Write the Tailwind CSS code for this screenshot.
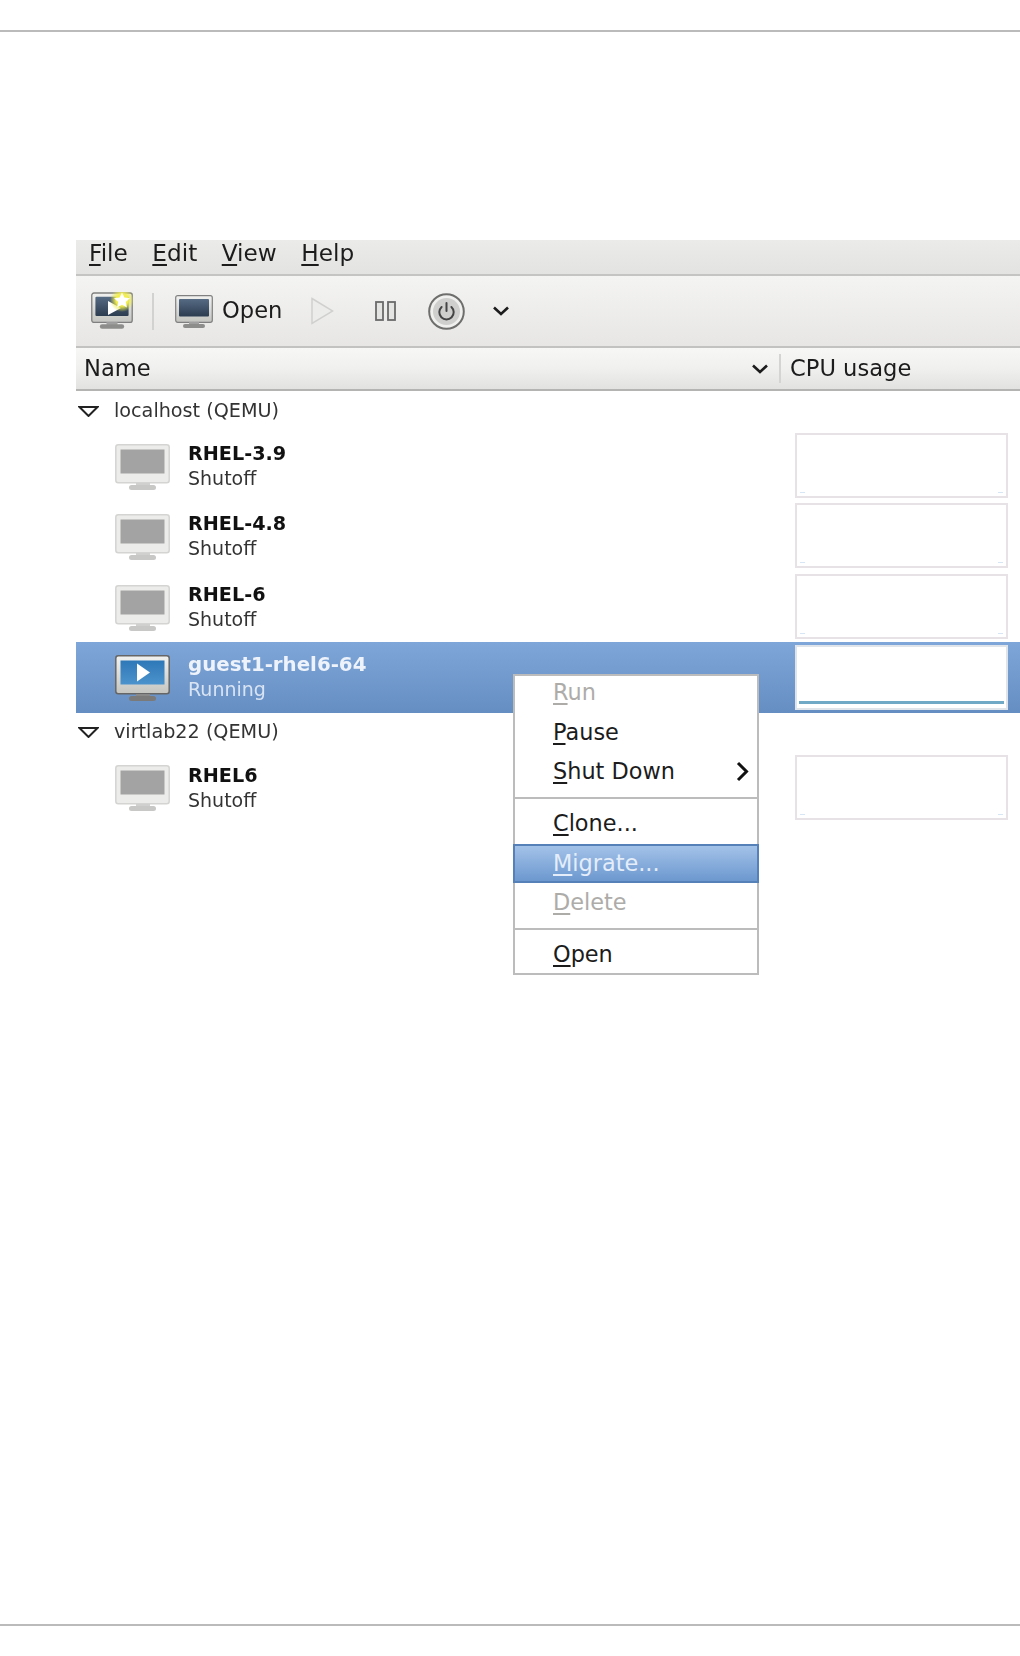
<!DOCTYPE html>
<html lang="en">
<head>
  <meta charset="UTF-8">
  <title>Virtual Machine Manager</title>
  <script src="https://cdn.jsdelivr.net/npm/@tailwindcss/browser@4"></script>
</head>
<body class="bg-white min-h-screen font-['DejaVu_Sans',sans-serif] text-[#1c1c1c] overflow-hidden">

  <!-- shared icons -->
  <svg class="absolute w-0 h-0">
    <defs>
      <linearGradient id="darkScreen" x1="0" y1="0" x2="0" y2="1">
        <stop offset="0" stop-color="#566b84"/>
        <stop offset="1" stop-color="#2c3c50"/>
      </linearGradient>
      <linearGradient id="blueScreen" x1="0" y1="0" x2="0" y2="1">
        <stop offset="0" stop-color="#2f78b8"/>
        <stop offset="1" stop-color="#4b93cc"/>
      </linearGradient>
      <linearGradient id="bezel" x1="0" y1="0" x2="0" y2="1">
        <stop offset="0" stop-color="#f2f2f0"/>
        <stop offset="1" stop-color="#c4c4c1"/>
      </linearGradient>
      <radialGradient id="glow">
        <stop offset="0.5" stop-color="#f2ee50"/>
        <stop offset="1" stop-color="#e8e840" stop-opacity="0"/>
      </radialGradient>
      <symbol id="vmOff" viewBox="0 0 55 46">
        <rect x="0.8" y="0.8" width="53.4" height="38" rx="2.5" fill="#ececea" stroke="#d4d4d2" stroke-width="1.5"/>
        <rect x="5.5" y="5.5" width="44" height="24" fill="#a3a3a3"/>
        <rect x="21" y="39" width="14" height="3" fill="#d0d0ce"/>
        <rect x="14" y="41" width="27" height="5" rx="2.5" fill="#c8c8c6"/>
      </symbol>
      <symbol id="vmOn" viewBox="0 0 55 46">
        <rect x="0.8" y="0.8" width="53.4" height="38" rx="2.5" fill="url(#bezel)" stroke="#666" stroke-width="1.5"/>
        <rect x="5.5" y="5.5" width="44" height="24" fill="url(#blueScreen)"/>
        <path d="M22 8.5 L35 17.5 L22 26.5 Z" fill="#fff"/>
        <rect x="21" y="39" width="14" height="3" fill="#888"/>
        <rect x="14" y="41" width="27" height="5" rx="2.5" fill="#7a7a7a"/>
      </symbol>
      <symbol id="vmDark" viewBox="0 0 38 33">
        <rect x="0.7" y="0.7" width="36.6" height="26.6" rx="2" fill="url(#bezel)" stroke="#808080" stroke-width="1.2"/>
        <rect x="4" y="4" width="30" height="17.5" rx="1" fill="url(#darkScreen)"/>
        <rect x="14" y="27" width="10" height="2.5" fill="#a0a0a0"/>
        <rect x="8" y="29" width="22" height="4" rx="2" fill="#8d8d8b"/>
      </symbol>
    </defs>
  </svg>

  <div class="h-[30px]"></div>
  <div class="h-[2px] bg-[#bbbbbb]"></div>
  <div class="h-[208px]"></div>

  <div class="relative ml-[76px] h-[1384px] blur-[0.6px]">
    <!-- menu bar -->
    <div class="h-[36px] flex items-center pl-[13px] pb-[7px] gap-[24.5px] text-[23.2px] bg-gradient-to-b from-[#ebebe9] to-[#e3e3e1] border-b-2 border-[#c4c4c2]">
      <span><span class="underline underline-offset-[3px]">F</span>ile</span>
      <span><span class="underline underline-offset-[3px]">E</span>dit</span>
      <span><span class="underline underline-offset-[3px]">V</span>iew</span>
      <span><span class="underline underline-offset-[3px]">H</span>elp</span>
    </div>

    <!-- toolbar -->
    <div class="h-[72px] flex items-center pl-[15px] bg-gradient-to-b from-[#f4f4f2] to-[#e7e6e4] border-b-2 border-[#c2c2c0]">
      <svg class="w-[42px] h-[38px] shrink-0" viewBox="0 0 42 38">
        <use href="#vmDark" x="0" y="0" width="42" height="37"/>
        <path d="M17 9 L30 16 L17 23 Z" fill="#fff"/>
        <circle cx="31" cy="8" r="12" fill="url(#glow)"/>
        <path d="M31 0.5 L33.4 5.6 L38.9 6.2 L34.8 10 L35.9 15.5 L31 12.8 L26.1 15.5 L27.2 10 L23.1 6.2 L28.6 5.6 Z" fill="#fff"/>
      </svg>
      <div class="ml-[19px] w-[2px] h-[37px] bg-[#d2d2d0]"></div>
      <svg class="ml-[21px] w-[38px] h-[33px] shrink-0"><use href="#vmDark"/></svg>
      <span class="ml-[9px] text-[22.6px]">Open</span>
      <svg class="ml-[29px] w-[23px] h-[28px] shrink-0" viewBox="0 0 23 28">
        <path d="M1 1.5 L21.5 14 L1 26.5 Z" fill="#ececea" stroke="#d0d0ce" stroke-width="1.5"/>
      </svg>
      <svg class="ml-[41px] w-[21px] h-[20px] shrink-0" viewBox="0 0 21 20">
        <rect x="1" y="1" width="7" height="18" fill="#e4e4e2" stroke="#6a6a6a" stroke-width="1.8"/>
        <rect x="13" y="1" width="7" height="18" fill="#e4e4e2" stroke="#6a6a6a" stroke-width="1.8"/>
      </svg>
      <svg class="ml-[32px] w-[37px] h-[37px] shrink-0" viewBox="0 0 37 37">
        <circle cx="18.5" cy="18.5" r="17.3" fill="#f0f0ee" stroke="#6e6e6c" stroke-width="2"/>
        <circle cx="18.5" cy="18.5" r="13.5" fill="#cfcfcd"/>
        <path d="M13.6 14 A7.2 7.2 0 1 0 23.4 14" fill="none" stroke="#444" stroke-width="2" stroke-linecap="round"/>
        <path d="M18.5 10 V18" stroke="#444" stroke-width="2" stroke-linecap="round"/>
      </svg>
      <svg class="ml-[27px] w-[18px] h-[12px] shrink-0" viewBox="0 0 18 12">
        <path d="M2 2.5 L9 9 L16 2.5" fill="none" stroke="#1c1c1c" stroke-width="2.6"/>
      </svg>
    </div>

    <!-- column header -->
    <div class="h-[43px] flex items-center bg-gradient-to-b from-[#f7f7f5] via-[#f0f0ee] to-[#e2e2e0] border-b-2 border-[#b4b4b2] text-[22.6px]">
      <span class="ml-[8px]">Name</span>
      <svg class="ml-auto w-[18px] h-[12px] shrink-0" viewBox="0 0 18 12">
        <path d="M2 2.5 L9 9 L16 2.5" fill="none" stroke="#1c1c1c" stroke-width="2.6"/>
      </svg>
      <div class="ml-[10px] w-[2px] h-[29px] bg-[#d4d4d2]"></div>
      <span class="ml-[9px] w-[230px]">CPU usage</span>
    </div>

    <!-- group: localhost -->
    <div class="h-[39px] flex items-center pt-[2px] text-[19.2px] text-[#333]">
      <svg class="ml-[2px] w-[21px] h-[11px] shrink-0" viewBox="0 0 21 11">
        <path d="M1.5 1 H19.5 L10.5 10 Z" fill="none" stroke="#222" stroke-width="2"/>
      </svg>
      <span class="ml-[15px]">localhost (QEMU)</span>
    </div>

    <div class="h-[70.6px] flex items-center">
      <svg class="ml-[39px] mt-[3px] w-[55px] h-[46px] shrink-0"><use href="#vmOff"/></svg>
      <div class="ml-[18px] mt-[1px] flex flex-col leading-[24px] text-[19px]">
        <span class="font-bold text-[19.2px] text-[#111]">RHEL-3.9</span>
        <span class="text-[#333]">Shutoff</span>
      </div>
      <div class="ml-auto mr-[12px] w-[213px] h-[65px] border-2 border-[#e6e2e6] bg-white flex justify-between items-end px-[3px] pb-[3px]">
        <div class="w-[5px] h-[1px] bg-[#d6e6f4]"></div>
        <div class="w-[5px] h-[1px] bg-[#d6e6f4]"></div>
      </div>
    </div>
    <div class="h-[70.6px] flex items-center">
      <svg class="ml-[39px] mt-[3px] w-[55px] h-[46px] shrink-0"><use href="#vmOff"/></svg>
      <div class="ml-[18px] mt-[1px] flex flex-col leading-[24px] text-[19px]">
        <span class="font-bold text-[19.2px] text-[#111]">RHEL-4.8</span>
        <span class="text-[#333]">Shutoff</span>
      </div>
      <div class="ml-auto mr-[12px] w-[213px] h-[65px] border-2 border-[#e6e2e6] bg-white flex justify-between items-end px-[3px] pb-[3px]">
        <div class="w-[5px] h-[1px] bg-[#d6e6f4]"></div>
        <div class="w-[5px] h-[1px] bg-[#d6e6f4]"></div>
      </div>
    </div>
    <div class="h-[70.6px] flex items-center">
      <svg class="ml-[39px] mt-[3px] w-[55px] h-[46px] shrink-0"><use href="#vmOff"/></svg>
      <div class="ml-[18px] mt-[1px] flex flex-col leading-[24px] text-[19px]">
        <span class="font-bold text-[19.2px] text-[#111]">RHEL-6</span>
        <span class="text-[#333]">Shutoff</span>
      </div>
      <div class="ml-auto mr-[12px] w-[213px] h-[65px] border-2 border-[#e6e2e6] bg-white flex justify-between items-end px-[3px] pb-[3px]">
        <div class="w-[5px] h-[1px] bg-[#d6e6f4]"></div>
        <div class="w-[5px] h-[1px] bg-[#d6e6f4]"></div>
      </div>
    </div>

    <!-- selected row -->
    <div class="h-[71px] flex items-center bg-gradient-to-b from-[#7fa6d8] to-[#658ec3]">
      <svg class="ml-[39px] mt-[1px] w-[55px] h-[46px] shrink-0"><use href="#vmOn"/></svg>
      <div class="ml-[18px] flex flex-col leading-[24px] text-[19px]">
        <span class="font-bold text-[19.8px] text-[#eef3fb]">guest1-rhel6-64</span>
        <span class="text-[#d9e4f3]">Running</span>
      </div>
      <div class="ml-auto mr-[12px] w-[213px] h-[65px] border-2 border-[#dfe3ea] bg-white flex items-end px-[2px] pb-[4px]">
        <div class="w-full h-[3px] bg-[#6fa9c6]"></div>
      </div>
    </div>

    <!-- group: virtlab22 -->
    <div class="h-[40px] flex items-center text-[19.2px] text-[#333]">
      <svg class="ml-[2px] w-[21px] h-[11px] shrink-0" viewBox="0 0 21 11">
        <path d="M1.5 1 H19.5 L10.5 10 Z" fill="none" stroke="#222" stroke-width="2"/>
      </svg>
      <span class="ml-[15px]">virtlab22 (QEMU)</span>
    </div>

    <div class="h-[70px] flex items-center">
      <svg class="ml-[39px] w-[55px] h-[46px] shrink-0"><use href="#vmOff"/></svg>
      <div class="ml-[18px] flex flex-col leading-[24px] text-[19px]">
        <span class="font-bold text-[19.2px] text-[#111]">RHEL6</span>
        <span class="text-[#333]">Shutoff</span>
      </div>
      <div class="ml-auto mr-[12px] w-[213px] h-[65px] border-2 border-[#e6e2e6] bg-white flex justify-between items-end px-[3px] pb-[3px]">
        <div class="w-[5px] h-[1px] bg-[#d6e6f4]"></div>
        <div class="w-[5px] h-[1px] bg-[#d6e6f4]"></div>
      </div>
    </div>

    <!-- context menu -->
    <div class="absolute left-[437px] top-[434px] w-[246px] bg-white border-2 border-[#bcbcbc] text-[22.4px]">
      <div class="h-[37px] flex items-center pl-[38px] pb-[3px] text-[#aeaca9]"><span><span class="underline underline-offset-[3px]">R</span>un</span></div>
      <div class="h-[39px] flex items-center pl-[38px]"><span><span class="underline underline-offset-[3px]">P</span>ause</span></div>
      <div class="h-[39px] flex items-center justify-between pl-[38px] pr-[8px]">
        <span><span class="underline underline-offset-[3px]">S</span>hut Down</span>
        <svg class="w-[13px] h-[21px]" viewBox="0 0 13 21"><path d="M2 2 L10.5 10.5 L2 19" fill="none" stroke="#111" stroke-width="3"/></svg>
      </div>
      <div class="h-[14px] flex items-center"><div class="w-full h-[2px] bg-[#bcbcbc]"></div></div>
      <div class="h-[39px] flex items-center pl-[38px] pb-[2px]"><span><span class="underline underline-offset-[3px]">C</span>lone...</span></div>
      <div class="h-[39px] -mx-[2px] flex items-center pl-[38px] border-2 border-[#5580b8] bg-gradient-to-b from-[#a3c2e8] to-[#6c98cf] text-[#e4edf9]"><span><span class="underline underline-offset-[3px]">M</span>igrate...</span></div>
      <div class="h-[39px] flex items-center pl-[38px] text-[#aeaca9]"><span><span class="underline underline-offset-[3px]">D</span>elete</span></div>
      <div class="h-[14px] flex items-center"><div class="w-full h-[2px] bg-[#bcbcbc]"></div></div>
      <div class="h-[37px] flex items-center pl-[38px]"><span><span class="underline underline-offset-[3px]">O</span>pen</span></div>
    </div>
  </div>

  <div class="h-[2px] bg-[#bbbbbb]"></div>
</body>
</html>
